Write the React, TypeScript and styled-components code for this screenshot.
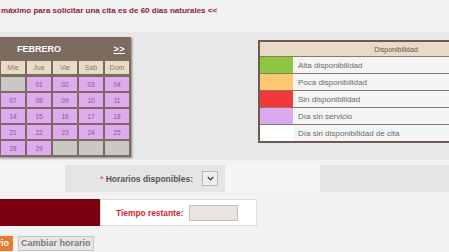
import React from 'react'
import styled, { createGlobalStyle } from 'styled-components'

const GlobalStyle = createGlobalStyle`
    html, body {
        margin: 0;
        padding: 0;
        background: #f2f2f2;
        overflow: hidden;
    }
    body {
        font-family: "Liberation Sans", Arial, sans-serif;
    }
`

// the screenshot is scrolled sideways, so the page starts left of the window
const Page = styled.div`
    width: 760px;
    margin-left: -120px;
`

const Notice = styled.p`
    box-sizing: border-box;
    height: 32px;
    margin: 0;
    padding: 6px 0 0 77px;
    font-size: 8px;
    line-height: 9px;
    font-weight: bold;
    color: #8a2232;
    white-space: nowrap;
`

const Panel = styled.section`
    box-sizing: border-box;
    height: 128px;
    background-color: #e8e8e8;
    display: flex;
    align-items: flex-start;
    padding: 5px 0 0 67px;
`

const Calendar = styled.div`
    width: 184px;
    background-color: #7d6b5f;
    box-shadow: 1px 1px 2px rgba(0, 0, 0, 0.45);
`

const CalHeader = styled.div`
    height: 24px;
    display: flex;
    align-items: center;
    justify-content: space-between;
    padding: 0 6px;
    color: #fff;
    font-size: 9px;
    font-weight: bold;
`

const NavLink = styled.span`
    text-decoration: underline;
    letter-spacing: 0.5px;
`

const Grid = styled.div`
    display: grid;
    grid-template-columns: repeat(7, 24px);
    grid-auto-rows: 14px;
    gap: 2px;
    padding: 0 2px 2px;
`

const DayName = styled.div`
    height: 13px;
    background-color: #e9dcc7;
    color: #86796d;
    font-size: 7px;
    display: flex;
    align-items: center;
    justify-content: center;
`

const Day = styled.div<{ $empty?: boolean }>`
    background-color: ${p => (p.$empty ? '#c9c8c4' : '#dfaaf0')};
    color: #76667a;
    font-size: 6.5px;
    display: flex;
    align-items: center;
    justify-content: center;
`

const Legend = styled.div`
    width: 272px;
    margin: 3px 0 0 127px;
    border: 2px solid #6b5b50;
    display: grid;
    grid-template-columns: 33px 1fr;
    grid-template-rows: 14px repeat(5, 16px);
    row-gap: 1px;
    background-color: #8a786b;
`

const LegendTitle = styled.div`
    grid-column: 1 / 3;
    background-color: #e9dac5;
    color: #5e5650;
    font-size: 7px;
    display: flex;
    align-items: center;
    justify-content: center;
`

const Swatch = styled.div<{ $color: string }>`
    background-color: ${p => p.$color};
`

const LegendText = styled.div`
    background-color: #f4f4f4;
    border-left: 1px solid #fbfbfb;
    color: #6a6a6a;
    font-size: 8px;
    display: flex;
    align-items: center;
    padding-left: 4px;
`

const FormRow = styled.div`
    margin-top: 5px;
    height: 27px;
    display: grid;
    grid-template-columns: 185px 160px 95px 1fr;
`

const Cell = styled.div<{ $shade?: boolean }>`
    background-color: ${p => (p.$shade ? '#e5e5e5' : '#f5f5f5')};
    display: flex;
    align-items: center;
    justify-content: flex-end;
    gap: 9px;
    padding-right: 7px;
`

const Label = styled.label`
    font-size: 8.5px;
    font-weight: bold;
    color: #555;
`

const Required = styled.span`
    color: #e03030;
    font-weight: normal;
    margin-right: 2px;
`

const SelectBox = styled.div`
    box-sizing: border-box;
    width: 16px;
    height: 15px;
    background-color: #efefef;
    border: 1px solid #b9b9b9;
    display: flex;
    align-items: center;
    justify-content: center;
`

const TimerRow = styled.div`
    margin-top: 7px;
    height: 27px;
    display: flex;
`

const RedBlock = styled.div`
    width: 220px;
    background-color: #7a0012;
`

const TimerBox = styled.div`
    box-sizing: border-box;
    width: 157px;
    background-color: #fff;
    border: 1px solid #dcdcdc;
    display: flex;
    align-items: center;
    gap: 6px;
    padding-left: 15px;
`

const TimerLabel = styled.span`
    font-size: 8.4px;
    font-weight: bold;
    color: #d21f2f;
`

const TimerInput = styled.div`
    box-sizing: border-box;
    width: 49px;
    height: 16px;
    background-color: #e8e4e0;
    border: 1px solid #c9bfb6;
`

const Buttons = styled.div`
    margin: 10px 0 0 41px;
    display: flex;
    gap: 5px;
`

const Button = styled.button<{ $primary?: boolean }>`
    height: 15px;
    padding: 0 ${p => (p.$primary ? '3px' : '2px')};
    font-family: inherit;
    font-size: 9px;
    font-weight: bold;
    line-height: 13px;
    color: ${p => (p.$primary ? '#fff' : '#7a7a7a')};
    background-color: ${p => (p.$primary ? '#e97c2c' : '#e6e6e6')};
    border: 1px solid ${p => (p.$primary ? '#e97c2c' : '#c4c4c4')};
    border-radius: 0;
`

const dayNames = ['Lun', 'Mar', 'Mie', 'Jue', 'Vie', 'Sab', 'Dom']

// febrero 2024 empieza en jueves
const cells: (number | null)[] = [
    null, null, null,
    ...Array.from({ length: 29 }, (_, i) => i + 1),
    null, null, null,
]

const legend = [
    { color: '#8dc73f', text: 'Alta disponibilidad' },
    { color: '#fdc870', text: 'Poca disponibilidad' },
    { color: '#f23838', text: 'Sin disponibilidad' },
    { color: '#dca8ee', text: 'Día sin servicio' },
    { color: '#ffffff', text: 'Día sin disponibilidad de cita' },
]

const App = () => {
    return (
        <Page>
            <GlobalStyle />
            <Notice>&gt;&gt; El plazo máximo para solicitar una cita es de 60 días naturales &lt;&lt;</Notice>
            <Panel>
                <Calendar>
                    <CalHeader>
                        <NavLink>&lt;&lt;</NavLink>
                        <span>FEBRERO</span>
                        <NavLink>&gt;&gt;</NavLink>
                    </CalHeader>
                    <Grid>
                        {dayNames.map(name => <DayName key={name}>{name}</DayName>)}
                        {cells.map((d, i) => (
                            <Day key={i} $empty={d === null}>
                                {d !== null && String(d).padStart(2, '0')}
                            </Day>
                        ))}
                    </Grid>
                </Calendar>
                <Legend>
                    <LegendTitle>Disponibilidad</LegendTitle>
                    {legend.map(item => (
                        <React.Fragment key={item.text}>
                            <Swatch $color={item.color} />
                            <LegendText>{item.text}</LegendText>
                        </React.Fragment>
                    ))}
                </Legend>
            </Panel>
            <FormRow>
                <Cell />
                <Cell $shade>
                    <Label><Required>*</Required>Horarios disponibles:</Label>
                    <SelectBox>
                        <svg width="7" height="5" viewBox="0 0 7 5">
                            <polyline points="0.8,1 3.5,3.8 6.2,1" fill="none" stroke="#333" strokeWidth="1.2" />
                        </svg>
                    </SelectBox>
                </Cell>
                <Cell />
                <Cell $shade />
            </FormRow>
            <TimerRow>
                <RedBlock />
                <TimerBox>
                    <TimerLabel>Tiempo restante:</TimerLabel>
                    <TimerInput />
                </TimerBox>
            </TimerRow>
            <Buttons>
                <Button $primary>Seleccionar horario</Button>
                <Button>Cambiar horario</Button>
            </Buttons>
        </Page>
    )
}

export default App
